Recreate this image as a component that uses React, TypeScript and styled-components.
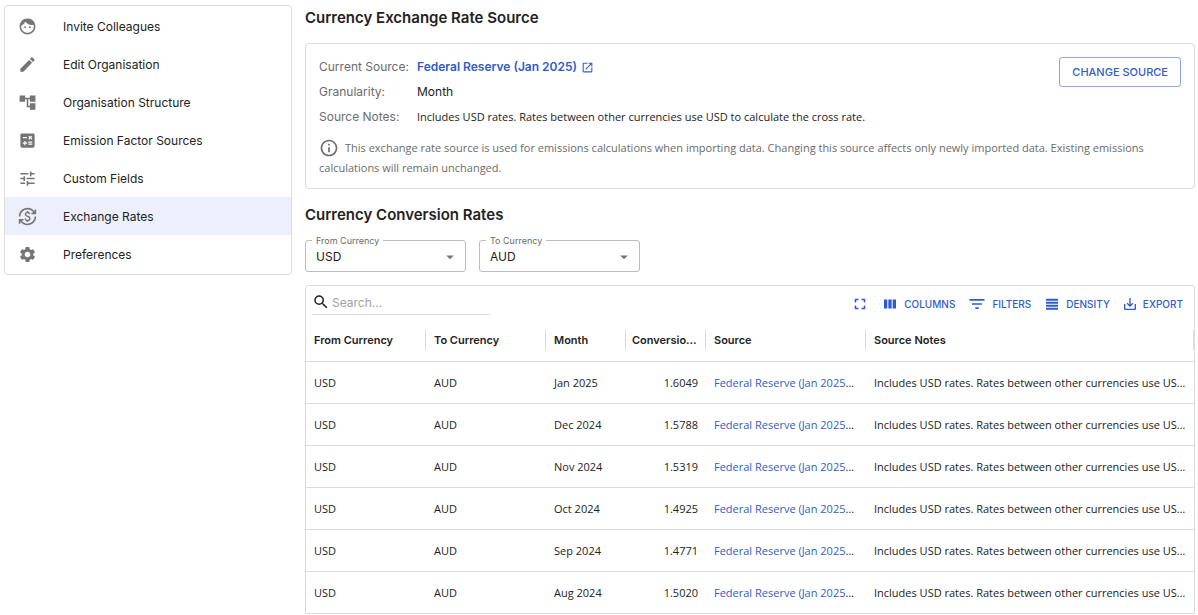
import React from 'react';
import styled, { createGlobalStyle } from 'styled-components';
import type { IconType } from 'react-icons';
import {
  MdAccountTree,
  MdArrowDropDown,
  MdCalculate,
  MdCurrencyExchange,
  MdEdit,
  MdFace,
  MdFilterList,
  MdFullscreen,
  MdInfoOutline,
  MdOpenInNew,
  MdSaveAlt,
  MdSearch,
  MdSettings,
  MdTune,
} from 'react-icons/md';

const color = {
  text: '#222222',
  muted: '#6b6b6b',
  icon: '#757575',
  line: '#dcdcdc',
  field: '#bdbdbd',
  blue: '#2f5ccd',
  selected: '#edf0fc',
};

const uiFont = "Inter, 'Liberation Sans', sans-serif";
const denseFont = "'Open Sans', 'Liberation Sans', sans-serif";

const GlobalStyle = createGlobalStyle`
  *, *::before, *::after { box-sizing: border-box; }
  body {
    margin: 0;
    background: #fff;
    color: ${color.text};
    font-family: ${uiFont};
    font-size: 12px;
  }
`;

const Page = styled.div`
  display: flex;
  align-items: flex-start;
  gap: 13px;
  padding: 5px 3px 0 4px;
`;

const SideNav = styled.nav`
  flex: 0 0 288px;
  padding: 1px 0;
  border: 1px solid ${color.line};
  border-radius: 4px;
`;

const NavList = styled.ul`
  margin: 0;
  padding: 0;
  list-style: none;
`;

const NavLink = styled.a<{ $selected: boolean }>`
  display: flex;
  align-items: center;
  gap: 26px;
  height: 38px;
  padding: 0 13px;
  color: ${color.text};
  text-decoration: none;
  background: ${(p) => (p.$selected ? color.selected : 'transparent')};

  svg {
    flex: none;
    width: 19px;
    height: 19px;
    color: ${color.icon};
  }
`;

const Main = styled.main`
  flex: 1;
  min-width: 0;
  padding-top: 1px;
`;

const Heading = styled.h2`
  margin: 0 0 13px;
  font-size: 15px;
  font-weight: 600;
  line-height: 24px;
`;

const SourceCard = styled.section`
  margin-bottom: 14px;
  padding: 13px 13px 10px;
  border: 1px solid ${color.line};
  border-radius: 4px;
`;

const SourceTop = styled.div`
  display: flex;
  align-items: flex-start;
  justify-content: space-between;
`;

const Details = styled.dl`
  display: grid;
  grid-template-columns: 98px 1fr;
  row-gap: 5px;
  margin: 0;
  line-height: 20px;

  dt { color: ${color.muted}; }
  dd { margin: 0; }
`;

const SmallText = styled.span`
  font-family: ${denseFont};
  font-size: 11px;
`;

const SourceLink = styled.a`
  display: inline-flex;
  align-items: center;
  gap: 4px;
  color: ${color.blue};
  font-weight: 600;
  text-decoration: none;
`;

const OutlinedButton = styled.button`
  height: 30px;
  padding: 0 12px;
  border: 1px solid #8ea6e4;
  border-radius: 3px;
  background: #fff;
  color: ${color.blue};
  font: 500 11px ${uiFont};
  text-transform: uppercase;
`;

const Info = styled.p`
  margin: 11px 0 0;
  max-width: 850px;
  color: ${color.muted};
  font: 400 11px/20px ${denseFont};

  svg {
    margin-right: 6px;
    vertical-align: top;
  }
`;

const Filters = styled.div`
  display: flex;
  gap: 13px;
  margin-bottom: 13px;
`;

const Field = styled.div`
  position: relative;
  width: 161px;
  height: 32px;

  label {
    position: absolute;
    top: -5px;
    left: 7px;
    padding: 0 4px;
    background: #fff;
    color: ${color.muted};
    font-size: 9px;
    line-height: 12px;
  }

  select {
    width: 100%;
    height: 100%;
    padding: 0 28px 0 10px;
    border: 1px solid ${color.field};
    border-radius: 3px;
    background: transparent;
    color: ${color.text};
    font: 400 12px ${uiFont};
    appearance: none;
  }

  svg {
    position: absolute;
    top: 8px;
    right: 7px;
    color: ${color.icon};
    pointer-events: none;
  }
`;

const Grid = styled.section`
  border: 1px solid ${color.line};
  border-bottom: 0;
  border-radius: 4px 4px 0 0;
`;

const Toolbar = styled.div`
  display: flex;
  align-items: flex-start;
  justify-content: space-between;
  height: 33px;
  padding: 0 11px 0 6px;
`;

const SearchBox = styled.label`
  display: flex;
  align-items: center;
  gap: 2px;
  width: 178px;
  height: 29px;
  padding-top: 4px;
  border-bottom: 1px solid ${color.line};

  svg { flex: none; }

  input {
    flex: 1;
    min-width: 0;
    padding: 0;
    border: 0;
    outline: 0;
    background: transparent;
    color: ${color.text};
    font: 400 12px ${uiFont};
  }

  input::placeholder { color: #a3a3a3; }
`;

const Tools = styled.div`
  display: flex;
  gap: 12px;
  padding-top: 9px;
`;

const ToolButton = styled.button`
  display: flex;
  align-items: center;
  gap: 5px;
  height: 18px;
  padding: 0;
  border: 0;
  background: none;
  color: ${color.blue};
  font: 500 10px ${uiFont};
  text-transform: uppercase;
`;

const Table = styled.table`
  width: 100%;
  table-layout: fixed;
  border-collapse: separate;
  border-spacing: 0;
`;

const HeadCell = styled.th`
  height: 43px;
  padding: 0;
  border-bottom: 1px solid ${color.line};
  font-size: 11px;
  font-weight: 600;
  text-align: left;
`;

const HeadLabel = styled.div<{ $tight?: boolean }>`
  height: 20px;
  padding: 0 ${(p) => (p.$tight ? '6px' : '8px')};
  border-right: 1px solid ${color.line};
  line-height: 20px;
  overflow: hidden;
  text-overflow: ellipsis;
  white-space: nowrap;
`;

const Cell = styled.td<{ $numeric?: boolean }>`
  height: 42px;
  padding: 0 8px;
  border-bottom: 1px solid ${color.line};
  font: 400 11px ${denseFont};
  text-align: ${(p) => (p.$numeric ? 'right' : 'left')};
  overflow: hidden;
  text-overflow: ellipsis;
  white-space: nowrap;

  a {
    color: ${color.blue};
    text-decoration: none;
  }
`;

const SourceCell = styled(Cell)`
  padding-right: 9px;

  svg {
    margin-left: 4px;
    vertical-align: middle;
  }
`;

const ColumnsIcon = () => (
  <svg width="18" height="18" viewBox="0 0 24 24" fill="currentColor" aria-hidden="true">
    <path d="M4 6h4.4v12H4zM9.8 6h4.4v12H9.8zM15.6 6H20v12h-4.4z" />
  </svg>
);

const DensityIcon = () => (
  <svg width="18" height="18" viewBox="0 0 24 24" fill="currentColor" aria-hidden="true">
    <path d="M4 5h16v2.6H4zM4 9h16v2.6H4zM4 13h16v2.6H4zM4 17h16v2.6H4z" />
  </svg>
);

const navItems: { label: string; Icon: IconType }[] = [
  { label: 'Invite Colleagues', Icon: MdFace },
  { label: 'Edit Organisation', Icon: MdEdit },
  { label: 'Organisation Structure', Icon: MdAccountTree },
  { label: 'Emission Factor Sources', Icon: MdCalculate },
  { label: 'Custom Fields', Icon: MdTune },
  { label: 'Exchange Rates', Icon: MdCurrencyExchange },
  { label: 'Preferences', Icon: MdSettings },
];

const columns = [
  { label: 'From Currency', width: 120 },
  { label: 'To Currency', width: 120 },
  { label: 'Month', width: 80 },
  { label: 'Conversion Rate', width: 80, tight: true },
  { label: 'Source', width: 160 },
  { label: 'Source Notes', width: undefined },
];

const rates = [
  ['Jan 2025', '1.6049'],
  ['Dec 2024', '1.5788'],
  ['Nov 2024', '1.5319'],
  ['Oct 2024', '1.4925'],
  ['Sep 2024', '1.4771'],
  ['Aug 2024', '1.5020'],
];

const sourceName = 'Federal Reserve (Jan 2025)';
const sourceNotes =
  'Includes USD rates. Rates between other currencies use USD to calculate the cross rate.';

function CurrencyField({ id, label, value }: { id: string; label: string; value: string }) {
  return (
    <Field>
      <select id={id} defaultValue={value}>
        <option>USD</option>
        <option>AUD</option>
      </select>
      <label htmlFor={id}>{label}</label>
      <MdArrowDropDown size={18} />
    </Field>
  );
}

export default function App() {
  return (
    <>
      <GlobalStyle />
      <Page>
        <SideNav>
          <NavList>
            {navItems.map(({ label, Icon }) => (
              <li key={label}>
                <NavLink href="#" $selected={label === 'Exchange Rates'}>
                  <Icon />
                  {label}
                </NavLink>
              </li>
            ))}
          </NavList>
        </SideNav>

        <Main>
          <Heading>Currency Exchange Rate Source</Heading>
          <SourceCard>
            <SourceTop>
              <Details>
                <dt>Current Source:</dt>
                <dd>
                  <SourceLink href="#">
                    {sourceName}
                    <MdOpenInNew size={13} />
                  </SourceLink>
                </dd>
                <dt>Granularity:</dt>
                <dd>Month</dd>
                <dt>Source Notes:</dt>
                <dd>
                  <SmallText>{sourceNotes}</SmallText>
                </dd>
              </Details>
              <OutlinedButton type="button">Change Source</OutlinedButton>
            </SourceTop>
            <Info>
              <MdInfoOutline size={20} />
              This exchange rate source is used for emissions calculations when importing data.
              Changing this source affects only newly imported data. Existing emissions calculations
              will remain unchanged.
            </Info>
          </SourceCard>

          <Heading>Currency Conversion Rates</Heading>
          <Filters>
            <CurrencyField id="from-currency" label="From Currency" value="USD" />
            <CurrencyField id="to-currency" label="To Currency" value="AUD" />
          </Filters>

          <Grid>
            <Toolbar>
              <SearchBox>
                <MdSearch size={18} />
                <input type="search" placeholder="Search…" aria-label="Search" />
              </SearchBox>
              <Tools>
                <ToolButton type="button" aria-label="Full screen">
                  <MdFullscreen size={18} />
                </ToolButton>
                <ToolButton type="button">
                  <ColumnsIcon />
                  Columns
                </ToolButton>
                <ToolButton type="button">
                  <MdFilterList size={20} />
                  Filters
                </ToolButton>
                <ToolButton type="button">
                  <DensityIcon />
                  Density
                </ToolButton>
                <ToolButton type="button">
                  <MdSaveAlt size={16} />
                  Export
                </ToolButton>
              </Tools>
            </Toolbar>
            <Table>
              <colgroup>
                {columns.map((c) => (
                  <col key={c.label} width={c.width} />
                ))}
              </colgroup>
              <thead>
                <tr>
                  {columns.map((c) => (
                    <HeadCell key={c.label} scope="col">
                      <HeadLabel $tight={c.tight}>{c.label}</HeadLabel>
                    </HeadCell>
                  ))}
                </tr>
              </thead>
              <tbody>
                {rates.map(([month, rate]) => (
                  <tr key={month}>
                    <Cell>USD</Cell>
                    <Cell>AUD</Cell>
                    <Cell>{month}</Cell>
                    <Cell $numeric>{rate}</Cell>
                    <SourceCell>
                      <a href="#">{sourceName}</a>
                      <MdOpenInNew size={13} />
                    </SourceCell>
                    <Cell>{sourceNotes}</Cell>
                  </tr>
                ))}
              </tbody>
            </Table>
          </Grid>
        </Main>
      </Page>
    </>
  );
}
